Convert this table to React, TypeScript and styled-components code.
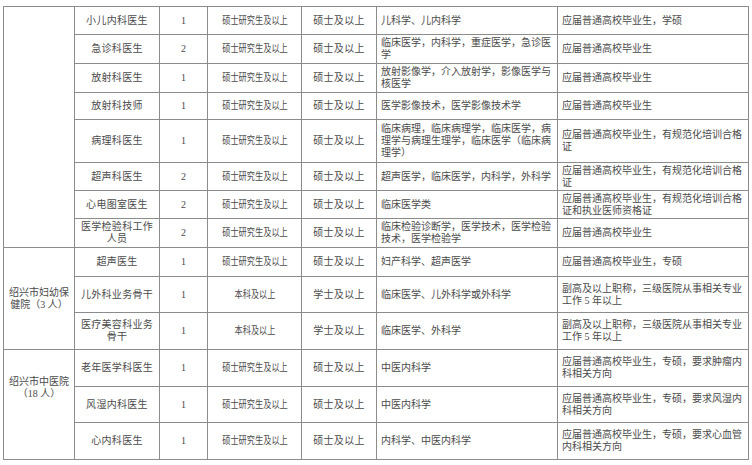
import * as React from "react";
import { createGlobalStyle, styled } from "styled-components";

/** One row of the recruitment table. */
type JobRow = {
    /** Post name. */
    post: string;
    /** Number of people. */
    count: string;
    /** Education requirement. */
    education: string;
    /** Degree requirement. */
    degree: string;
    /** Required majors. */
    major: string;
    /** Other requirements. */
    other: string;
};

/** A group of rows that belongs to one employer. */
type Group = {
    unit: React.ReactNode;
    /** Extra room below the unit name, pushes it up in its cell. */
    shiftUp?: number;
    rows: JobRow[];
};

const master = "硕士研究生及以上";
const masterDegree = "硕士及以上";
const fresh = "应届普通高校毕业生";

const groups: Group[] = [
    {
        unit: "",
        rows: [
            { post: "小儿内科医生", count: "1", education: master, degree: masterDegree, major: "儿科学、儿内科学", other: "应届普通高校毕业生，学硕" },
            { post: "急诊科医生", count: "2", education: master, degree: masterDegree, major: "临床医学，内科学，重症医学，急诊医学", other: fresh },
            { post: "放射科医生", count: "1", education: master, degree: masterDegree, major: "放射影像学，介入放射学，影像医学与核医学", other: fresh },
            { post: "放射科技师", count: "1", education: master, degree: masterDegree, major: "医学影像技术，医学影像技术学", other: fresh },
            {
                post: "病理科医生",
                count: "1",
                education: master,
                degree: masterDegree,
                major: "临床病理，临床病理学，临床医学，病理学与病理生理学，临床医学（临床病理学）",
                other: "应届普通高校毕业生，有规范化培训合格证",
            },
            { post: "超声科医生", count: "2", education: master, degree: masterDegree, major: "超声医学，临床医学，内科学，外科学", other: "应届普通高校毕业生，有规范化培训合格证" },
            { post: "心电图室医生", count: "2", education: master, degree: masterDegree, major: "临床医学类", other: "应届普通高校毕业生，有规范化培训合格证和执业医师资格证" },
            { post: "医学检验科工作人员", count: "2", education: master, degree: masterDegree, major: "临床检验诊断学，医学技术，医学检验技术，医学检验学", other: fresh },
        ],
    },
    {
        unit: (
            <>
                绍兴市妇幼保
                <br />
                健院（3 人）
            </>
        ),
        rows: [
            { post: "超声医生", count: "1", education: master, degree: masterDegree, major: "妇产科学、超声医学", other: "应届普通高校毕业生，专硕" },
            { post: "儿外科业务骨干", count: "1", education: "本科及以上", degree: "学士及以上", major: "临床医学、儿外科学或外科学", other: "副高及以上职称，三级医院从事相关专业工作 5 年以上" },
            { post: "医疗美容科业务骨干", count: "1", education: "本科及以上", degree: "学士及以上", major: "临床医学、外科学", other: "副高及以上职称，三级医院从事相关专业工作 5 年以上" },
        ],
    },
    {
        unit: (
            <>
                绍兴市中医院
                <br />
                （18 人）
            </>
        ),
        shiftUp: 34,
        rows: [
            { post: "老年医学科医生", count: "1", education: master, degree: masterDegree, major: "中医内科学", other: "应届普通高校毕业生，专硕，要求肿瘤内科相关方向" },
            { post: "风湿内科医生", count: "1", education: master, degree: masterDegree, major: "中医内科学", other: "应届普通高校毕业生，专硕，要求风湿内科相关方向" },
            { post: "心内科医生", count: "1", education: master, degree: masterDegree, major: "内科学、中医内科学", other: "应届普通高校毕业生，专硕，要求心血管内科相关方向" },
        ],
    },
];

// Heights of the body rows, taken between the grid lines.
const rowHeights = [27, 28, 28, 26, 42, 27, 27, 28, 28, 35, 36, 36, 35, 36];

const GlobalStyle = createGlobalStyle`
    html, body {
        margin: 0;
        padding: 0;
        background: #ffffff;
    }
    body {
        font-family: "Liberation Serif", "Noto Sans CJK SC", serif;
    }
`;

const Page = styled.div`
    padding: 6px 0 0 3px;
`;

const Table = styled.div<{ $rows: string }>`
    display: grid;
    width: max-content;
    grid-template-columns: 70px 84px 47px 93px 74px 180px 190px;
    grid-template-rows: ${(p) => p.$rows};
    gap: 1px;
    padding: 1px;
    background: #8c8c8c;
`;

const Cell = styled.div<{ $align?: "left" | "center"; $span?: number; $padBottom?: number }>`
    display: flex;
    align-items: center;
    justify-content: ${(p) => (p.$align === "left" ? "flex-start" : "center")};
    text-align: ${(p) => (p.$align === "left" ? "left" : "center")};
    grid-row: ${(p) => (p.$span ? `span ${p.$span}` : "auto")};
    padding: 0 3px ${(p) => p.$padBottom ?? 0}px 3px;
    background: #ffffff;
    color: #4a4a4a;
    font-size: 10px;
    line-height: 12px;
    overflow: hidden;
`;

const TextCell = styled(Cell)`
    padding-left: 4px;
    padding-right: 4px;
`;

const Condensed = styled.span`
    display: inline-block;
    white-space: nowrap;
    transform: scaleX(0.82);
`;

const Spaced = styled.span`
    letter-spacing: 0.3px;
`;

export default function App() {
    return (
        <Page>
            <GlobalStyle />
            <Table $rows={rowHeights.map((h) => `${h}px`).join(" ")}>
                {groups.map((group, gi) => (
                    <React.Fragment key={gi}>
                        <TextCell $span={group.rows.length} $padBottom={group.shiftUp}>
                            {group.unit}
                        </TextCell>
                        {group.rows.map((row, ri) => (
                            <React.Fragment key={ri}>
                                <Cell>
                                    <Spaced>{row.post}</Spaced>
                                </Cell>
                                <Cell>{row.count}</Cell>
                                <Cell>
                                    <Condensed>{row.education}</Condensed>
                                </Cell>
                                <Cell>
                                    <Spaced>{row.degree}</Spaced>
                                </Cell>
                                <TextCell $align="left">{row.major}</TextCell>
                                <TextCell $align="left">{row.other}</TextCell>
                            </React.Fragment>
                        ))}
                    </React.Fragment>
                ))}
            </Table>
        </Page>
    );
}
